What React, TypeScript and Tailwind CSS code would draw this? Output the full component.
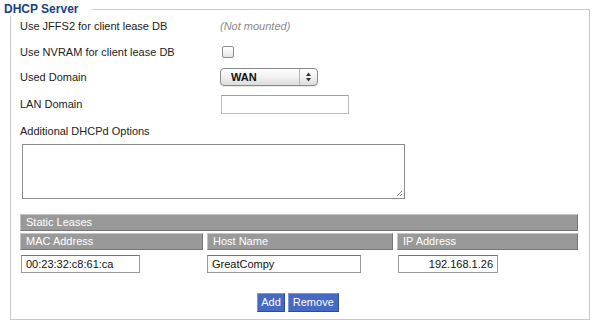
const font = { fontFamily: '"Liberation Sans", Arial, sans-serif' };

const HeaderCell = ({ label, className }: { label: string; className?: string }) => (
  <div
    className={
      "h-[17px] bg-[#999] border-t border-l border-t-[#c4c4c4] border-l-[#c4c4c4] border-r border-b border-r-[#777] border-b-[#777] pl-[5px] text-[11px] leading-[15px] text-white " +
      (className ?? "")
    }
  >
    {label}
  </div>
);

const Row = ({ label, children, className }: { label: string; children?: React.ReactNode; className?: string }) => (
  <div className={"flex items-center h-[18px] " + (className ?? "")}>
    <div className="w-[200px] shrink-0">{label}</div>
    {children}
  </div>
);

export default function App() {
  return (
    <div className="w-[596px] h-[325px] bg-white text-[#222] text-[11px]" style={font}>
      <fieldset className="ml-[10px] w-[580px] mt-[2px] h-[318px] border border-[#c9c9c9] pl-[9px] pr-[11px]">
        <legend className="-ml-[16px] pr-[14px] text-[12px] leading-[14px] font-bold text-[#1c3f84]">
          DHCP Server
        </legend>

        <Row label="Use JFFS2 for client lease DB" className="mt-[1px]">
          <span className="italic text-[#8a8a8a]">(Not mounted)</span>
        </Row>

        <Row label="Use NVRAM for client lease DB" className="mt-[8px]">
          <span className="ml-[2px] w-[12px] h-[12px] rounded-[2px] border border-[#8c8c8c] bg-gradient-to-b from-white to-[#e6e6e6]" />
        </Row>

        <Row label="Used Domain" className="mt-[7px]">
          <div className="flex items-center w-[98px] h-[18px] rounded-[4px] border border-[#8a8a8a] bg-gradient-to-b from-white via-[#f1f1f1] to-[#dcdcdc] shadow-[0_1px_0_#e8e8e8]">
            <span className="pl-[10px] flex-1 font-bold text-[11px] text-[#111]">WAN</span>
            <span className="w-px h-[16px] bg-[#b5b5b5]" />
            <svg width="17" height="14" viewBox="0 0 17 14">
              <path d="M8.5 2.5 L11 6 L6 6 Z" fill="#333" />
              <path d="M8.5 11.5 L11 8 L6 8 Z" fill="#333" />
            </svg>
          </div>
        </Row>

        <div className="flex items-center h-[19px] mt-[9px]">
          <div className="w-[201px] shrink-0">LAN Domain</div>
          <div className="w-[128px] h-[19px] border border-[#bdbdbd] border-t-[#a0a0a0]" />
        </div>

        <div className="h-[18px] mt-[8px] flex items-center">Additional DHCPd Options</div>

        <div className="relative ml-[2px] mt-[4px] w-[383px] h-[55px] border border-[#8c8c8c]">
          <svg className="absolute right-[1px] bottom-[1px]" width="8" height="8" viewBox="0 0 8 8">
            <path d="M7 2 L2 7 M7 5 L5 7" stroke="#888" strokeWidth="1" />
          </svg>
        </div>

        <div className="mt-[15px]">
          <HeaderCell label="Static Leases" />
          <div className="flex gap-[4px] mt-[2px]">
            <HeaderCell label="MAC Address" className="w-[183px]" />
            <HeaderCell label="Host Name" className="w-[186px]" />
            <HeaderCell label="IP Address" className="flex-1" />
          </div>
          <div className="flex mt-[5px] h-[18px]">
            <div className="ml-[1px] w-[119px] h-[18px] border border-[#999] border-t-[#777] pl-[4px] leading-[16px] text-[#111]">
              00:23:32:c8:61:ca
            </div>
            <div className="ml-[67px] w-[154px] h-[18px] border border-[#999] border-t-[#777] pl-[4px] leading-[16px] text-[#111]">
              GreatCompy
            </div>
            <div className="ml-[37px] w-[100px] h-[18px] border border-[#999] border-t-[#777] pr-[4px] text-right leading-[16px] text-[#111]">
              192.168.1.26
            </div>
          </div>
        </div>

        <div className="flex justify-center gap-[3px] mt-[20px] pr-[2px]">
          <button className="h-[19px] px-[3px] bg-[#4569c4] border border-[#7f95cf] border-b-[#2d4c98] border-r-[#2d4c98] text-white text-[11px] leading-[15px]">
            Add
          </button>
          <button className="h-[19px] px-[4px] bg-[#4569c4] border border-[#7f95cf] border-b-[#2d4c98] border-r-[#2d4c98] text-white text-[11px] leading-[15px]">
            Remove
          </button>
        </div>
      </fieldset>
    </div>
  );
}
